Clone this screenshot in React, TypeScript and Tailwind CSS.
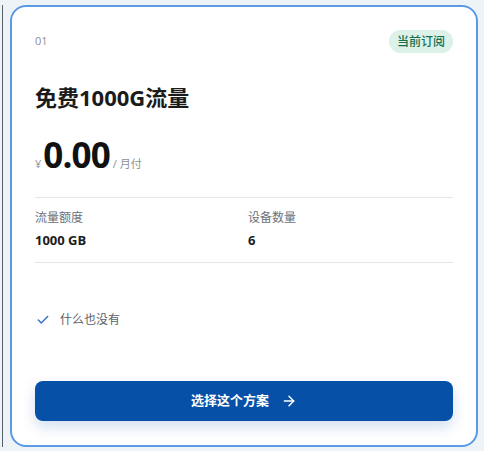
import { Check, ArrowRight } from 'lucide-react';

const plan = {
  index: '01',
  name: '免费1000G流量',
  price: '0.00',
  period: '月付',
  traffic: '1000 GB',
  devices: '6',
  features: ['什么也没有'],
};

export default function App() {
  return (
    <div
      className="min-h-screen bg-[#eef3f8] pl-[2px] pt-[5px]"
      style={{ fontFamily: '"Open Sans", "Noto Sans CJK SC", sans-serif' }}
    >
      <div className="flex border-l border-[#59616a] pl-[7px]">
        <div className="w-[468px] h-[442px] rounded-[16px] border-2 border-[#5b9be5] bg-white px-[23px] pt-[23px] pb-6 flex flex-col">
          {/* header */}
          <div className="flex items-center justify-between h-[23px]">
            <span className="text-[11px] text-[#8a8f96]">{plan.index}</span>
            <span className="rounded-full bg-[#dcf1e8] px-2 h-[23px] leading-[23px] text-[12px] font-medium text-[#17704d]">
              当前订阅
            </span>
          </div>

          <h2 className="mt-[30px] text-[22px] leading-[28px] font-bold text-[#1b1b1b]">{plan.name}</h2>

          <div className="mt-[24px] flex items-baseline h-[40px]">
            <span className="text-[11px] text-[#8a8f96] mr-[2px]">¥</span>
            <span className="text-[35px] leading-[40px] font-bold tracking-tight text-[#111]">{plan.price}</span>
            <span className="ml-[3px] text-[11px] text-[#8a8f96]">/ {plan.period}</span>
          </div>

          {/* stats */}
          <div className="mt-[22px] grid grid-cols-2 gap-x-2 border-y border-[#e3e8ed] pt-3 pb-[13px]">
            <div className="flex flex-col gap-[5px]">
              <span className="text-[12px] leading-4 text-[#6b7178]">流量额度</span>
              <span className="text-[13px] leading-[18px] font-bold text-[#1b1b1b]">{plan.traffic}</span>
            </div>
            <div className="flex flex-col gap-[5px]">
              <span className="text-[12px] leading-4 text-[#6b7178]">设备数量</span>
              <span className="text-[13px] leading-[18px] font-bold text-[#1b1b1b]">{plan.devices}</span>
            </div>
          </div>

          <ul className="mt-[47px] flex flex-col gap-2">
            {plan.features.map((f) => (
              <li key={f} className="flex items-center h-5 gap-[10px] text-[12px] text-[#5b6168]">
                <Check size={14} strokeWidth={2.5} className="text-[#2f74c9] ml-[1px]" />
                {f}
              </li>
            ))}
          </ul>

          <button className="mt-auto h-[40px] w-full rounded-[8px] bg-[#0650a7] text-white text-[13px] font-bold flex items-center justify-center gap-[12px] shadow-[0_6px_14px_rgba(6,80,167,0.18)]">
            选择这个方案
            <ArrowRight size={16} strokeWidth={2.2} />
          </button>
        </div>
      </div>
    </div>
  );
}
